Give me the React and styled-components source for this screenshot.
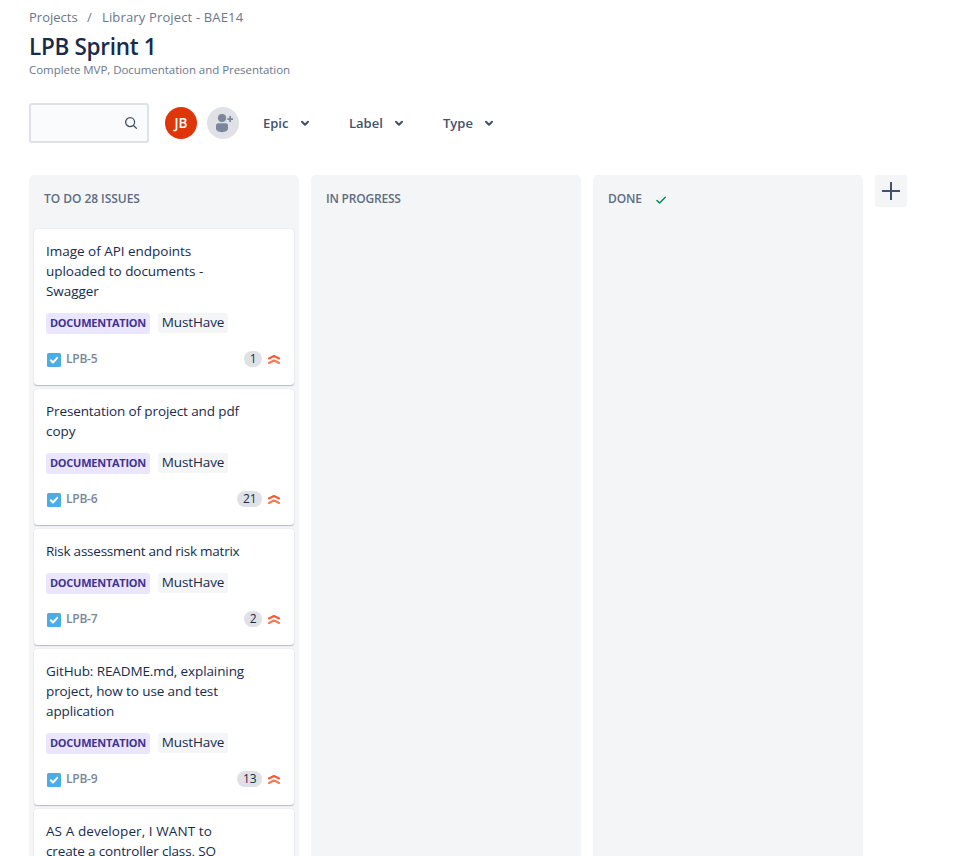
import React from "react";
import styled, { createGlobalStyle } from "styled-components";

const Global = createGlobalStyle`
  * { box-sizing: border-box; }
  html, body { margin: 0; padding: 0; background: #fff; overflow: hidden; }
  body { font-family: "Open Sans", "Noto Sans", sans-serif; color: #172b4d; }
`;

const Page = styled.main`
  height: 856px;
  overflow: hidden;
  padding: 7px 0 0 29px;
  display: flex;
  flex-direction: column;
`;

const Breadcrumbs = styled.nav`
  display: flex;
  height: 20px;
  line-height: 20px;
  font-size: 13px;
  color: #6b778c;
  white-space: nowrap;
`;

const Crumb = styled.span`
  width: ${(p) => (p.$w ? `${p.$w}px` : "auto")};
  letter-spacing: ${(p) => p.$ls || 0}px;
`;

const Title = styled.h1`
  margin: 6px 0 0;
  height: 28px;
  line-height: 28px;
  font-size: 22.5px;
  font-weight: 600;
  letter-spacing: -0.3px;
`;

const Goal = styled.p`
  margin: 0;
  height: 18px;
  line-height: 18px;
  font-size: 11.5px;
  color: #6b778c;
  letter-spacing: -0.05px;
`;

const Toolbar = styled.div`
  display: flex;
  align-items: center;
  height: 40px;
  margin-top: 24px;
`;

const Search = styled.div`
  width: 120px;
  height: 40px;
  border: 2px solid #dfe1e6;
  border-radius: 3px;
  background: #fafbfc;
  display: flex;
  align-items: center;
  justify-content: flex-end;
  padding-right: 9px;
  margin-right: 16px;
`;

const Avatar = styled.div`
  width: 32px;
  height: 32px;
  border-radius: 50%;
  display: flex;
  align-items: center;
  justify-content: center;
  background: ${(p) => p.$bg};
  color: #fff;
  font-size: 13.5px;
  font-weight: 600;
  margin-right: 10px;
`;

const Filter = styled.button`
  width: ${(p) => p.$w}px;
  margin: 0 0 0 ${(p) => p.$gap}px;
  padding: 0;
  border: 0;
  background: none;
  display: flex;
  align-items: center;
  justify-content: space-between;
  font: 600 13px/20px "Open Sans", sans-serif;
  letter-spacing: 0;
  color: #42526e;
`;

const Board = styled.div`
  display: flex;
  align-items: flex-start;
  gap: 12px;
  margin-top: 32px;
  flex: 1;
  min-height: 0;
`;

const Column = styled.section`
  width: 270px;
  height: 100%;
  overflow: hidden;
  background: #f4f5f7;
  border-radius: 5px 5px 0 0;
  padding: 0 5px;
`;

const ColumnHeader = styled.h2`
  margin: 0;
  height: 54px;
  padding: 14px 10px 0;
  display: flex;
  align-items: flex-start;
  gap: 13px;
  font-size: 12px;
  line-height: 20px;
  font-weight: 600;
  letter-spacing: ${(p) => p.$ls}px;
  color: #5e6c84;
`;

const HeaderIcon = styled.span`
  display: flex;
  align-items: center;
  height: 20px;
  padding-top: 2px;
`;

const Card = styled.article`
  width: 260px;
  margin-bottom: 4px;
  padding: 12px 12px 16px;
  background: #fff;
  border-radius: 3px;
  box-shadow: 0 1px 1px rgba(9, 30, 66, 0.25), 0 0 1px rgba(9, 30, 66, 0.2);
`;

const CardLine = styled.div`
  height: 20px;
  line-height: 20px;
  font-size: 13.5px;
  white-space: nowrap;
  letter-spacing: ${(p) => p.$ls}px;
`;

const Tags = styled.div`
  display: flex;
  gap: 8px;
  height: 20px;
  margin: 12px 0 16px;
`;

const Epic = styled.span`
  width: 104px;
  height: 21px;
  border-radius: 3px;
  background: #eae6ff;
  color: #403294;
  font-size: 11px;
  line-height: 20px;
  font-weight: 700;
  text-align: center;
  letter-spacing: -0.25px;
`;

const Label = styled.span`
  width: 70px;
  height: 20px;
  border-radius: 3px;
  background: #f4f5f7;
  font-size: 13.5px;
  line-height: 19px;
  text-align: center;
  letter-spacing: -0.1px;
`;

const Footer = styled.footer`
  display: flex;
  align-items: center;
  height: 20px;
  padding: 0 2px 0 1px;
`;

const Key = styled.span`
  flex: 1;
  margin-left: 5px;
  font-size: 12px;
  line-height: 20px;
  font-weight: 600;
  color: #7a869a;
  letter-spacing: -0.25px;
`;

const Estimate = styled.span`
  height: 16px;
  min-width: 18px;
  padding: 0 5.8px;
  border-radius: 8px;
  background: #dfe1e6;
  font-size: 12px;
  line-height: 16px;
  text-align: center;
  letter-spacing: -0.3px;
  margin-right: 6px;
`;

const AddColumn = styled.button`
  width: 32px;
  height: 32px;
  padding: 0;
  border: 0;
  border-radius: 3px;
  background: #f4f5f7;
  display: flex;
  align-items: center;
  justify-content: center;
`;

const SearchIcon = () => (
  <svg width="14" height="14" viewBox="0 0 14 14" fill="none" stroke="#42526e" strokeWidth="1.3" strokeLinecap="round">
    <circle cx="6.1" cy="6.1" r="4.5" />
    <path d="M9.5 9.5 12.4 12.2" />
  </svg>
);

const AddPersonIcon = () => (
  <svg width="20" height="20" viewBox="0 0 20 20" fill="#7a869a">
    <circle cx="9" cy="5" r="4.1" />
    <path d="M3 12.6C3 11.2 4 10.3 5.4 10.3h7.2c1.4 0 2.4.9 2.4 2.3v3c0 2.2-2.7 3.6-6 3.6s-6-1.4-6-3.6z" />
    <path d="M16.300 3h1.700v2.200h2v1.700h-2V9h-1.700V6.900h-2V5.200h2z" />
  </svg>
);

const Chevron = () => (
  <svg width="10" height="8" viewBox="0 0 10 8" fill="none" stroke="#42526e" strokeWidth="2" strokeLinecap="round" strokeLinejoin="round">
    <path d="M2 2.800 5 5.700 8 2.800" />
  </svg>
);

const DoneIcon = () => (
  <svg width="12" height="10" viewBox="0 0 12 10" fill="none" stroke="#00875a" strokeWidth="1.5" strokeLinecap="round" strokeLinejoin="round">
    <path d="M2 5.500 4.600 8 10.300 2.300" />
  </svg>
);

const TaskIcon = () => (
  <svg width="14" height="14" viewBox="0 0 14 14" transform="translate(0 1)">
    <rect width="14" height="14" rx="1.500" fill="#4bade8" />
    <path d="M3.900 7.300 6 9.500 10.200 4.800" fill="none" stroke="#fff" strokeWidth="2" strokeLinecap="round" strokeLinejoin="round" />
  </svg>
);

const PriorityIcon = () => (
  <svg width="12" height="12" viewBox="0 0 12 12" fill="none" strokeWidth="2" strokeLinecap="round" strokeLinejoin="round">
    <path d="M1 5.500 6 2.900 11 5.500" stroke="#ff5630" />
    <path d="M1 10 6 7.400 11 10" stroke="#ff7452" />
  </svg>
);

const PlusIcon = () => (
  <svg width="18" height="18" viewBox="0 0 18 18" stroke="#42526e" strokeWidth="2">
    <path d="M9 0v18M0 9h18" />
  </svg>
);

const filters = [
  { name: "Epic", width: 47, gap: 14 },
  { name: "Label", width: 55, gap: 39 },
  { name: "Type", width: 51, gap: 39 },
];

const issues = [
  { key: "LPB-5", points: 1, lines: [["Image of API endpoints", -0.02], ["uploaded to documents -", -0.04], ["Swagger", -0.05]] },
  { key: "LPB-6", points: 21, lines: [["Presentation of project and pdf", -0.11], ["copy", -0.05]] },
  { key: "LPB-7", points: 2, lines: [["Risk assessment and risk matrix", -0.23]] },
  { key: "LPB-9", points: 13, lines: [["GitHub: README.md, explaining", -0.11], ["project, how to use and test", -0.11], ["application", -0.12]] },
  { key: "LPB-10", points: 3, lines: [["AS A developer, I WANT to", 0.08], ["create a controller class, SO", -0.14]] },
];

const IssueCard = ({ issue }) => (
  <Card>
    {issue.lines.map(([text, ls]) => (
      <CardLine key={text} $ls={ls}>{text}</CardLine>
    ))}
    <Tags>
      <Epic>DOCUMENTATION</Epic>
      <Label>MustHave</Label>
    </Tags>
    <Footer>
      <TaskIcon />
      <Key>{issue.key}</Key>
      <Estimate>{issue.points}</Estimate>
      <PriorityIcon />
    </Footer>
  </Card>
);

export default function App() {
  return (
    <Page>
      <Global />
      <Breadcrumbs>
        <Crumb $w={58}>Projects</Crumb>
        <Crumb $w={15}>/</Crumb>
        <Crumb $ls={0.15}>Library Project - BAE14</Crumb>
      </Breadcrumbs>
      <Title>LPB Sprint 1</Title>
      <Goal>Complete MVP, Documentation and Presentation</Goal>
      <Toolbar>
        <Search><SearchIcon /></Search>
        <Avatar $bg="#de350b">JB</Avatar>
        <Avatar $bg="#dfe1e6"><AddPersonIcon /></Avatar>
        {filters.map((f) => (
          <Filter key={f.name} $w={f.width} $gap={f.gap}>{f.name}<Chevron /></Filter>
        ))}
      </Toolbar>
      <Board>
        <Column>
          <ColumnHeader $ls={-0.05}>TO DO 28 ISSUES</ColumnHeader>
          {issues.map((issue) => <IssueCard key={issue.key} issue={issue} />)}
        </Column>
        <Column>
          <ColumnHeader $ls={-0.2}>IN PROGRESS</ColumnHeader>
        </Column>
        <Column>
          <ColumnHeader $ls={-0.15}>DONE<HeaderIcon><DoneIcon /></HeaderIcon></ColumnHeader>
        </Column>
        <AddColumn aria-label="Add column"><PlusIcon /></AddColumn>
      </Board>
    </Page>
  );
}
